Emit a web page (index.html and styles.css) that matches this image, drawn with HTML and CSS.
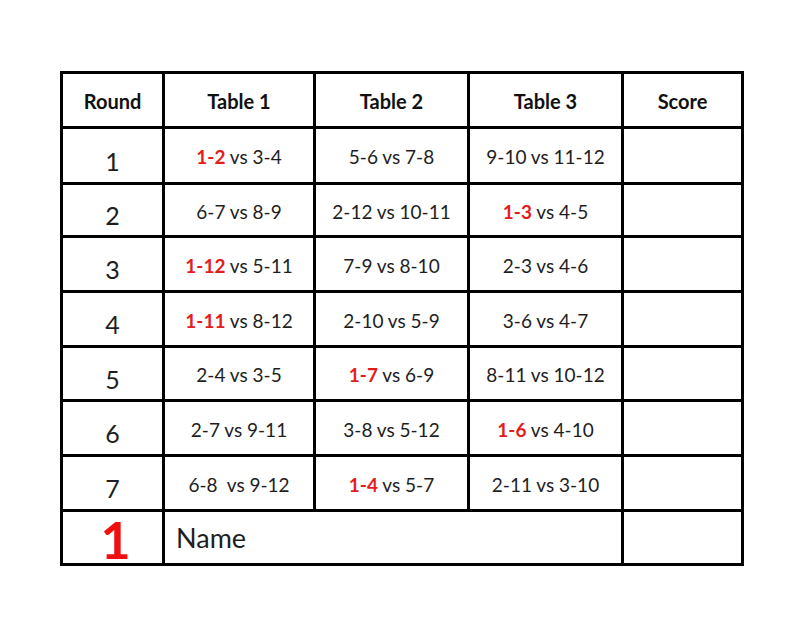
FILE: index.html
```html
<!DOCTYPE html>
<html>
<head>
<meta charset="utf-8">
<link rel="stylesheet" href="styles.css">
</head>
<body>
<div class="page">
  <div class="grid">
    <div class="cell head">Round</div>
    <div class="cell head">Table 1</div>
    <div class="cell head">Table 2</div>
    <div class="cell head">Table 3</div>
    <div class="cell head">Score</div>

    <div class="cell round">1</div>
    <div class="cell pair"><b class="red">1-2</b>&nbsp;vs 3-4</div>
    <div class="cell pair">5-6 vs 7-8</div>
    <div class="cell pair">9-10 vs 11-12</div>
    <div class="cell"></div>

    <div class="cell round">2</div>
    <div class="cell pair">6-7 vs 8-9</div>
    <div class="cell pair">2-12 vs 10-11</div>
    <div class="cell pair"><b class="red">1-3</b>&nbsp;vs 4-5</div>
    <div class="cell"></div>

    <div class="cell round">3</div>
    <div class="cell pair"><b class="red">1-12</b>&nbsp;vs 5-11</div>
    <div class="cell pair">7-9 vs 8-10</div>
    <div class="cell pair">2-3 vs 4-6</div>
    <div class="cell"></div>

    <div class="cell round">4</div>
    <div class="cell pair"><b class="red">1-11</b>&nbsp;vs 8-12</div>
    <div class="cell pair">2-10 vs 5-9</div>
    <div class="cell pair">3-6 vs 4-7</div>
    <div class="cell"></div>

    <div class="cell round">5</div>
    <div class="cell pair">2-4 vs 3-5</div>
    <div class="cell pair"><b class="red">1-7</b>&nbsp;vs 6-9</div>
    <div class="cell pair">8-11 vs 10-12</div>
    <div class="cell"></div>

    <div class="cell round">6</div>
    <div class="cell pair">2-7 vs 9-11</div>
    <div class="cell pair">3-8 vs 5-12</div>
    <div class="cell pair"><b class="red">1-6</b>&nbsp;vs 4-10</div>
    <div class="cell"></div>

    <div class="cell round">7</div>
    <div class="cell pair">6-8&nbsp; vs 9-12</div>
    <div class="cell pair"><b class="red">1-4</b>&nbsp;vs 5-7</div>
    <div class="cell pair">2-11 vs 3-10</div>
    <div class="cell"></div>

    <div class="cell big">1</div>
    <div class="cell name">Name</div>
    <div class="cell"></div>
  </div>
</div>
</body>
</html>
```

FILE: styles.css
```css
html, body {
  margin: 0;
  padding: 0;
  background: #ffffff;
}

.page {
  padding: 71px 0 0 60px;
  font-family: Lato, "Liberation Sans", sans-serif;
  color: #1e1e1e;
}

.grid {
  display: grid;
  grid-template-columns: 102px 151px 154px 154px 120px;
  grid-template-rows: 55px 56px 53px 55px 55px 54px 55px 55px 54px;
  width: 684px;
  box-sizing: border-box;
  border-left: 3px solid #000;
  border-top: 3px solid #000;
}

.cell {
  box-sizing: border-box;
  border-right: 3px solid #000;
  border-bottom: 3px solid #000;
  display: flex;
  align-items: center;
  justify-content: center;
  white-space: nowrap;
}

.head {
  font-weight: 700;
  font-size: 20px;
  color: #111;
  padding-top: 1px;
}

.pair {
  font-size: 19px;
  padding-top: 2px;
}

.round {
  font-size: 25px;
  padding-top: 10px;
}

.red {
  color: #e51c1c;
  font-weight: 700;
}

.big {
  color: #f01010;
  font-weight: 700;
  font-size: 52px;
  padding-left: 6px;
  padding-top: 2px;
}

.name {
  grid-column: span 3;
  justify-content: flex-start;
  padding-left: 11px;
  font-size: 27px;
}
```
